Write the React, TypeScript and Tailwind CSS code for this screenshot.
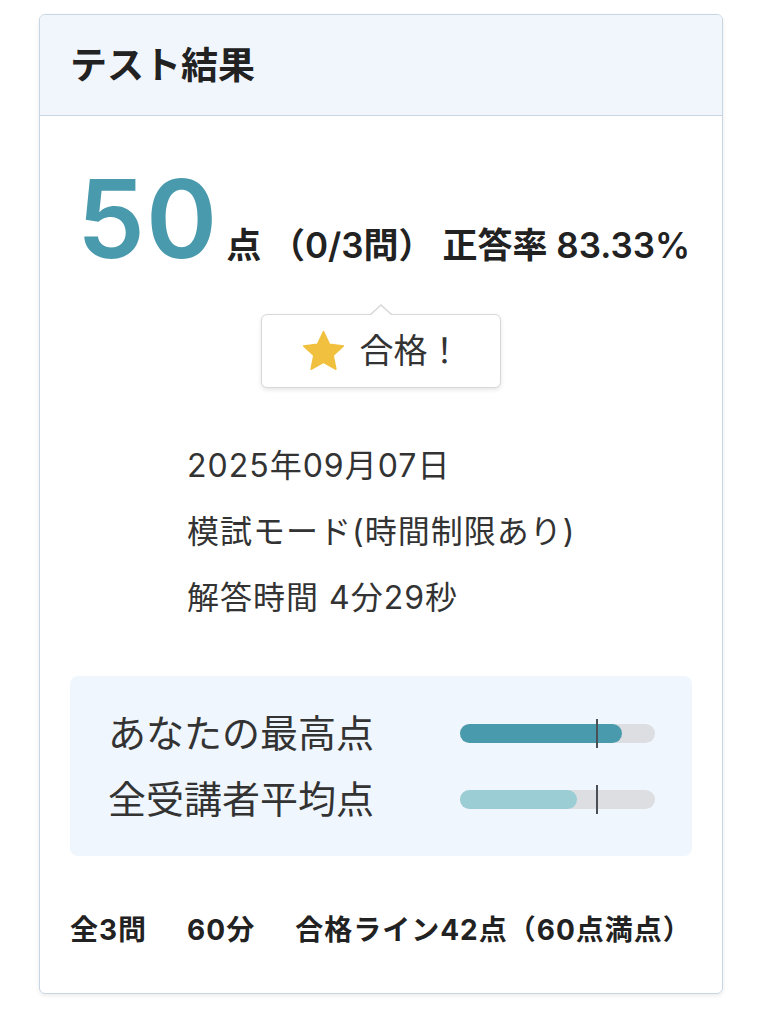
import React from 'react';

const font = { fontFamily: 'Inter, "Noto Sans CJK JP", sans-serif' };

const Bar = ({ pct, color }: { pct: number; color: string }) => (
    <div className="relative w-[195px] h-[19px] rounded-full bg-[#dcdee1]">
        <div className={`h-full rounded-full ${color}`} style={{ width: `${pct}%` }} />
        {/* 合格ライン */}
        <div className="absolute left-[136px] top-[-5px] w-[2px] h-[29px] bg-[#4a4f55]" />
    </div>
);

const App = () => {
    const info = ['2025年09月07日', '模試モード(時間制限あり)', '解答時間 4分29秒'];
    return (
        <div className="bg-white min-h-[1024px] pt-[14px] pl-[39px] pr-[40px]" style={font}>
            <div className="border border-[#c8d5e3] rounded-[6px] shadow-[0_2px_4px_rgba(0,0,0,0.08)] overflow-hidden">
                <div className="h-[101px] bg-[#f1f6fd] border-b border-[#c8d5e3] flex items-center px-[30px]">
                    <h1 className="text-[37px] font-bold text-[#222] leading-none">テスト結果</h1>
                </div>

                <div className="px-[30px] pb-[46px]">
                    <div className="flex items-baseline pl-[7px] pt-[49px] text-[#222]">
                        <span className="text-[108px] leading-none font-semibold text-[#4a9aad] tracking-[1px]">50</span>
                        <span className="text-[35px] leading-none font-semibold ml-[8px]">点 （0/3問） 正答率 83.33%</span>
                    </div>

                    <div className="flex justify-center mt-[41px]">
                        <div className="relative w-[240px] h-[74px] bg-white border border-[#d8d8d8] rounded-[6px] shadow-[0_2px_4px_rgba(0,0,0,0.1)] flex items-center justify-center gap-[14px]">
                            <div className="absolute left-1/2 -translate-x-1/2 top-[-11px] w-0 h-0 border-x-[12px] border-x-transparent border-b-[11px] border-b-[#d8d8d8]" />
                            <div className="absolute left-1/2 -translate-x-1/2 top-[-9px] w-0 h-0 border-x-[11px] border-x-transparent border-b-[10px] border-b-white" />
                            <svg width="45" height="42" viewBox="0 0 24 23">
                                <path d="M12 0.8l3.3 7 7.6.9-5.6 5.2 1.5 7.6L12 17.7 5.2 21.5l1.5-7.6L1.1 8.7l7.6-.9z" fill="#f0c03e" stroke="#f0c03e" strokeWidth="0.8" strokeLinejoin="round" />
                            </svg>
                            <span className="text-[34px] text-[#333] leading-none">合格！</span>
                        </div>
                    </div>

                    <div className="ml-[117px] mt-[60px] flex flex-col gap-[30px] text-[32px] leading-[36px] tracking-[1px] text-[#333]">
                        {info.map((t) => (
                            <div key={t}>{t}</div>
                        ))}
                    </div>

                    <div className="mt-[60px] bg-[#eff6fd] rounded-[8px] pl-[38px] pr-[37px] py-[34px] flex flex-col gap-[20px]">
                        <div className="flex items-center justify-between">
                            <span className="text-[38px] text-[#333] leading-[46px]">あなたの最高点</span>
                            <Bar pct={83} color="bg-[#4a9aad]" />
                        </div>
                        <div className="flex items-center justify-between">
                            <span className="text-[38px] text-[#333] leading-[46px]">全受講者平均点</span>
                            <Bar pct={60} color="bg-[#9bcdd5]" />
                        </div>
                    </div>

                    <div className="mt-[57px] flex gap-[40px] text-[28px] leading-[34px] tracking-[1px] font-bold text-[#222] whitespace-nowrap">
                        <span>全3問</span>
                        <span>60分</span>
                        <span>合格ライン42点（60点満点）</span>
                    </div>
                </div>
            </div>
        </div>
    );
};

export default App;
